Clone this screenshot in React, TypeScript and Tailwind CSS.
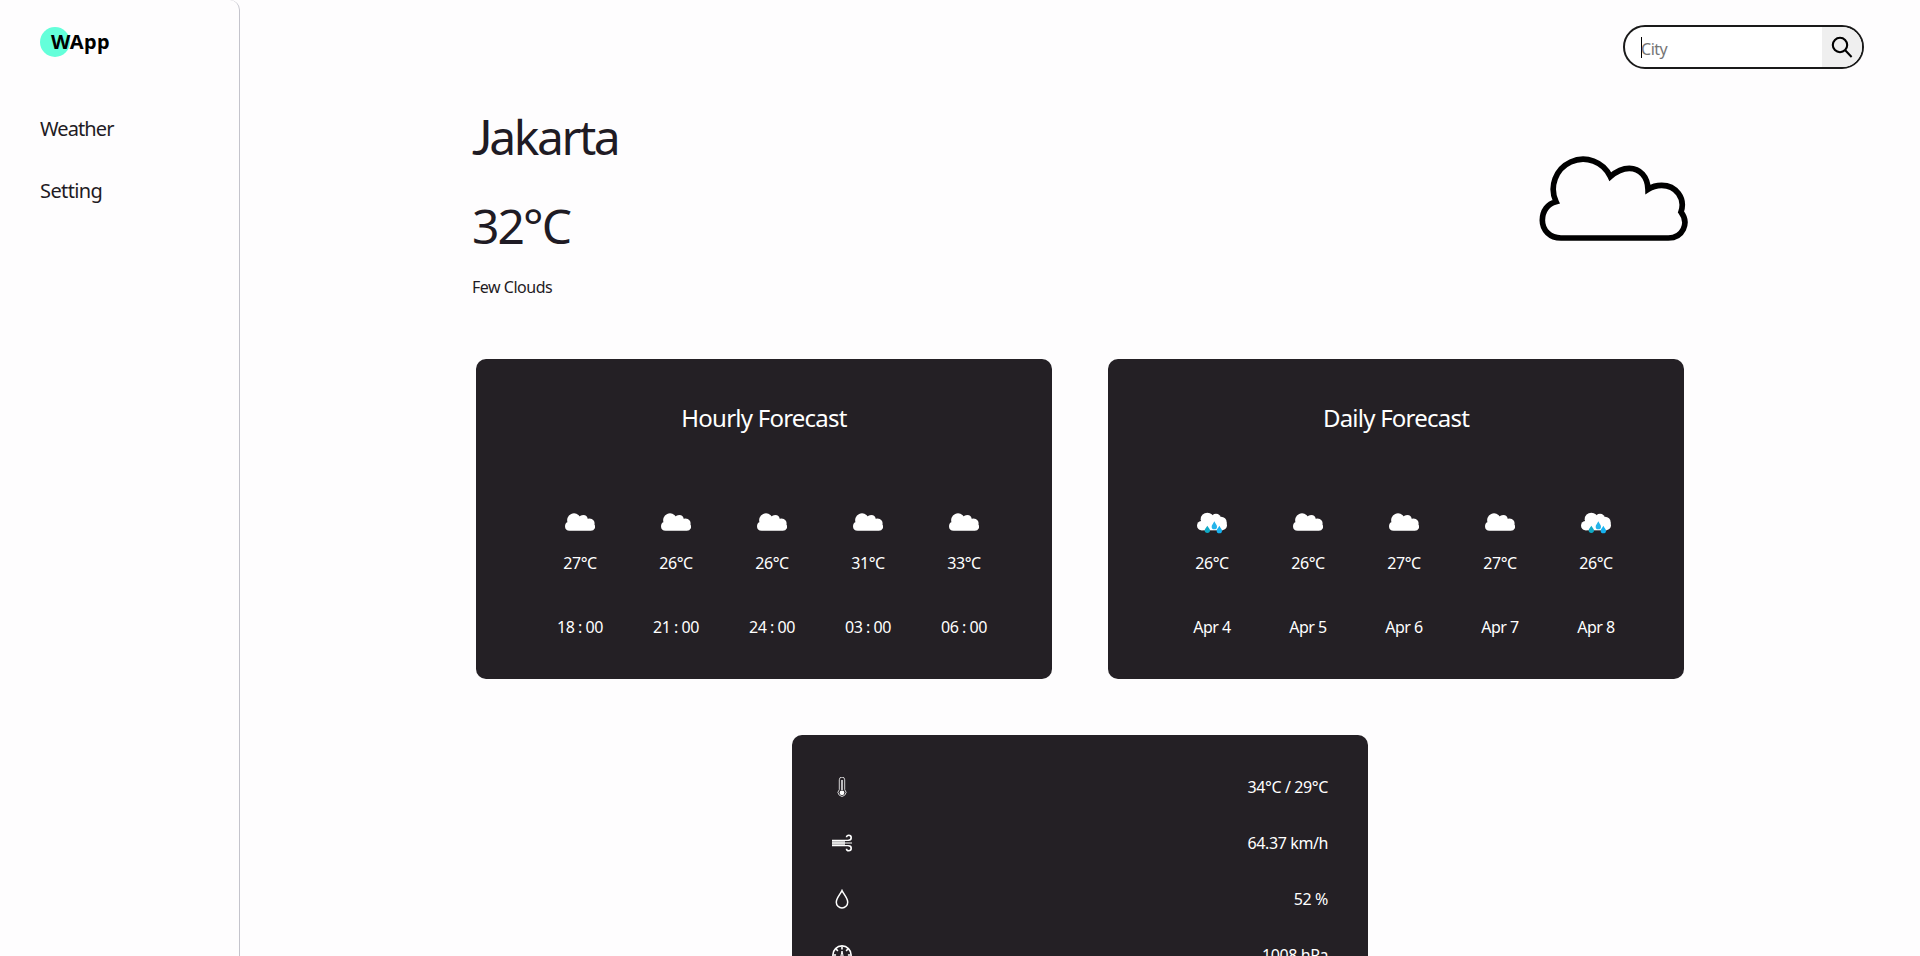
type Forecast = { temp: string; label: string; rain?: boolean };

const hourly: Forecast[] = [
  { temp: "27°C", label: "18 : 00" },
  { temp: "26°C", label: "21 : 00" },
  { temp: "26°C", label: "24 : 00" },
  { temp: "31°C", label: "03 : 00" },
  { temp: "33°C", label: "06 : 00" },
];

const daily: Forecast[] = [
  { temp: "26°C", label: "Apr 4", rain: true },
  { temp: "26°C", label: "Apr 5" },
  { temp: "27°C", label: "Apr 6" },
  { temp: "27°C", label: "Apr 7" },
  { temp: "26°C", label: "Apr 8", rain: true },
];

const CLOUD =
  "M168 212A89 89 0 1 1 331 137C349 121 366 112 388 112C420 112 443 138 444 175C456 167 470 163 485 163C528 163 557 202 543 243C569 277 548 321 505 321H183C150 321 127 298 127 268C127 240 143 218 168 212Z";

function CloudOutline() {
  return (
    <svg className="mr-[-2px] h-[88px] w-[154px]" viewBox="108 72 462 264">
      <path d={CLOUD} fill="none" stroke="#000" strokeWidth="17" />
    </svg>
  );
}

function CloudIcon() {
  return (
    <svg className="h-[30px] w-[30px]" viewBox="112 -26 456 456">
      <path d={CLOUD} fill="#fff" stroke="#fff" strokeWidth="30" strokeLinejoin="round" />
    </svg>
  );
}

function RainIcon() {
  return (
    <svg className="h-[30px] w-[30px]" viewBox="0 2 90 90">
      <g fill="#fff">
        <circle cx="14" cy="58" r="14" />
        <circle cx="31" cy="39" r="20" />
        <circle cx="57" cy="37" r="15" />
        <circle cx="72" cy="48" r="17" />
        <circle cx="75" cy="57" r="15" />
        <rect x="13" y="40" width="64" height="32" />
      </g>
      <path d="M31 58c3 6 8 9 8 14a8 8 0 0 1-16 0c0-5 5-8 8-14z" fill="#10a9c4" />
      <path d="M52 45c3 7 8 11 8 16a8 8 0 0 1-16 0c0-5 5-9 8-16z" fill="#25b4ea" />
      <path d="M67 58c3 6 8 10 8 15a8 8 0 0 1-16 0c0-5 5-9 8-15z" fill="#16b2f0" />
    </svg>
  );
}

function ForecastCard({ title, items }: { title: string; items: Forecast[] }) {
  return (
    <section className="h-80 w-[576px] rounded-[10px] bg-[#242025] pt-[43px] text-white">
      <h2 className="text-center text-[24px] leading-8 tracking-[-0.032em]">{title}</h2>
      <ul className="ml-14 flex pt-[73px]">
        {items.map((item) => (
          <li key={item.label} className="flex w-24 flex-col items-center text-base leading-6 tracking-[-0.03em]">
            {item.rain ? <RainIcon /> : <CloudIcon />}
            <span className="mt-[14px]">{item.temp}</span>
            <span className="mt-10">{item.label}</span>
          </li>
        ))}
      </ul>
    </section>
  );
}

function ThermometerIcon() {
  return (
    <svg className="size-5" viewBox="0 0 20 20" fill="none" stroke="#fff">
      <path d="M7.3 12.6V2.8a2.7 2.7 0 0 1 5.4 0v9.8a3.9 3.9 0 1 1-5.4 0z" strokeWidth="0.8" />
      <path d="M10 3v10" strokeWidth="2" opacity="0.7" />
      <circle cx="10" cy="15.8" r="2.4" fill="#fff" stroke="none" />
    </svg>
  );
}

function WindIcon() {
  return (
    <svg className="size-5" viewBox="0 0 20 20" fill="none" stroke="#fff">
      <path d="M0 7.3h17M0 10h20M0 12.7h17" strokeWidth="1.2" />
      <path d="M0 7h13v6H0z" fill="#fff" stroke="none" opacity="0.7" />
      <path d="M14.5 4.3c0-1.3 1-2 2.2-2 1.5 0 2.5 1 2.5 2.5s-1 2.5-2.7 2.5M14.5 15.7c0 1.3 1 2 2.2 2 1.5 0 2.5-1 2.5-2.5s-1-2.5-2.7-2.5" strokeWidth="1.6" />
    </svg>
  );
}

function DropIcon() {
  return (
    <svg className="size-5" viewBox="0 0 20 20" fill="none" stroke="#fff" strokeWidth="1.5">
      <path d="M10 1.5C8.5 5 4.3 9.2 4.3 13.2a5.7 5.7 0 0 0 11.4 0C15.7 9.2 11.5 5 10 1.5z" />
    </svg>
  );
}

function GaugeIcon() {
  return (
    <svg className="size-5" viewBox="0 0 20 20" fill="none" stroke="#fff">
      <circle cx="10" cy="10" r="9.1" strokeWidth="1.6" />
      <path d="M10 1.5v3M4 4l1.9 1.9M16 4l-1.9 1.9M1.5 10h2.6M18.5 10h-2.6" strokeWidth="1.6" />
      <path d="M10 6l-1.3 6h2.6z" strokeWidth="1" />
      <circle cx="10" cy="12.5" r="1.5" fill="#fff" />
    </svg>
  );
}

const details = [
  { icon: <ThermometerIcon />, value: "34°C / 29°C" },
  { icon: <WindIcon />, value: "64.37 km/h" },
  { icon: <DropIcon />, value: "52 %" },
  { icon: <GaugeIcon />, value: "1008 hPa" },
];

export default function App() {
  return (
    <div className="flex h-[956px] overflow-hidden bg-[#fefdfe] font-['Noto_Sans',sans-serif] text-[#1f1b24]">
      <aside className="w-60 shrink-0 rounded-tr-[10px] border-r border-[#c4c4cc] pl-10">
        <div className="relative mt-[27px] flex h-[30px] items-center pl-[11px]">
          <span className="absolute left-0 size-[30px] rounded-full bg-[#64ffda]" />
          <span className="relative text-[20px] leading-7 font-bold tracking-[0.015em] text-black">WApp</span>
        </div>
        <nav className="mt-[58px] flex flex-col gap-[34px] text-[20px] leading-7">
          <a className="tracking-[-0.045em]">Weather</a>
          <a className="tracking-[-0.03em]">Setting</a>
        </nav>
      </aside>

      <main className="flex min-w-0 flex-1 flex-col">
        <header className="flex justify-end pt-[25px] pr-14">
          <form className="flex h-11 w-[241px] overflow-hidden rounded-full border-2 border-[#1a1a1a] bg-white">
            <div className="flex flex-1 items-center pl-4">
              <span className="h-[21px] w-px bg-black" />
              <span className="mt-[3px] -ml-px text-base leading-6 tracking-[-0.03em] text-[#757575]">City</span>
            </div>
            <button type="button" className="flex w-10 items-center justify-center bg-[#efefef]">
              <svg className="mr-[1px] size-[22px]" viewBox="0 0 22 22" fill="none" stroke="#000">
                <circle cx="9" cy="9" r="7.2" strokeWidth="2.1" />
                <path d="M14 14l6.6 7" strokeWidth="2" />
              </svg>
            </button>
          </form>
        </header>

        <div className="mx-auto w-[1216px]">
          <div className="mt-9 flex justify-between">
            <div>
              <h1 className="text-[48px] leading-[64px] tracking-[-0.05em]">
                <span className="font-['Lato',sans-serif] tracking-[-0.065em]">J</span>akarta
              </h1>
              <p className="mt-[25px] text-[48px] leading-[64px] tracking-[-0.04em]">32°C</p>
              <p className="mt-[17px] text-base leading-6 tracking-[-0.03em]">Few Clouds</p>
            </div>
            <div className="pt-[50px]">
              <CloudOutline />
            </div>
          </div>

          <div className="mt-[60px] flex flex-wrap justify-center gap-14">
            <ForecastCard title="Hourly Forecast" items={hourly} />
            <ForecastCard title="Daily Forecast" items={daily} />
            <section className="w-[576px] rounded-[10px] bg-[#242025] px-10 py-6 text-white">
              {details.map((d) => (
                <div key={d.value} className="flex h-14 items-center justify-between">
                  {d.icon}
                  <span className="text-base leading-6 tracking-[-0.025em]">{d.value}</span>
                </div>
              ))}
            </section>
          </div>
        </div>
      </main>
    </div>
  );
}
